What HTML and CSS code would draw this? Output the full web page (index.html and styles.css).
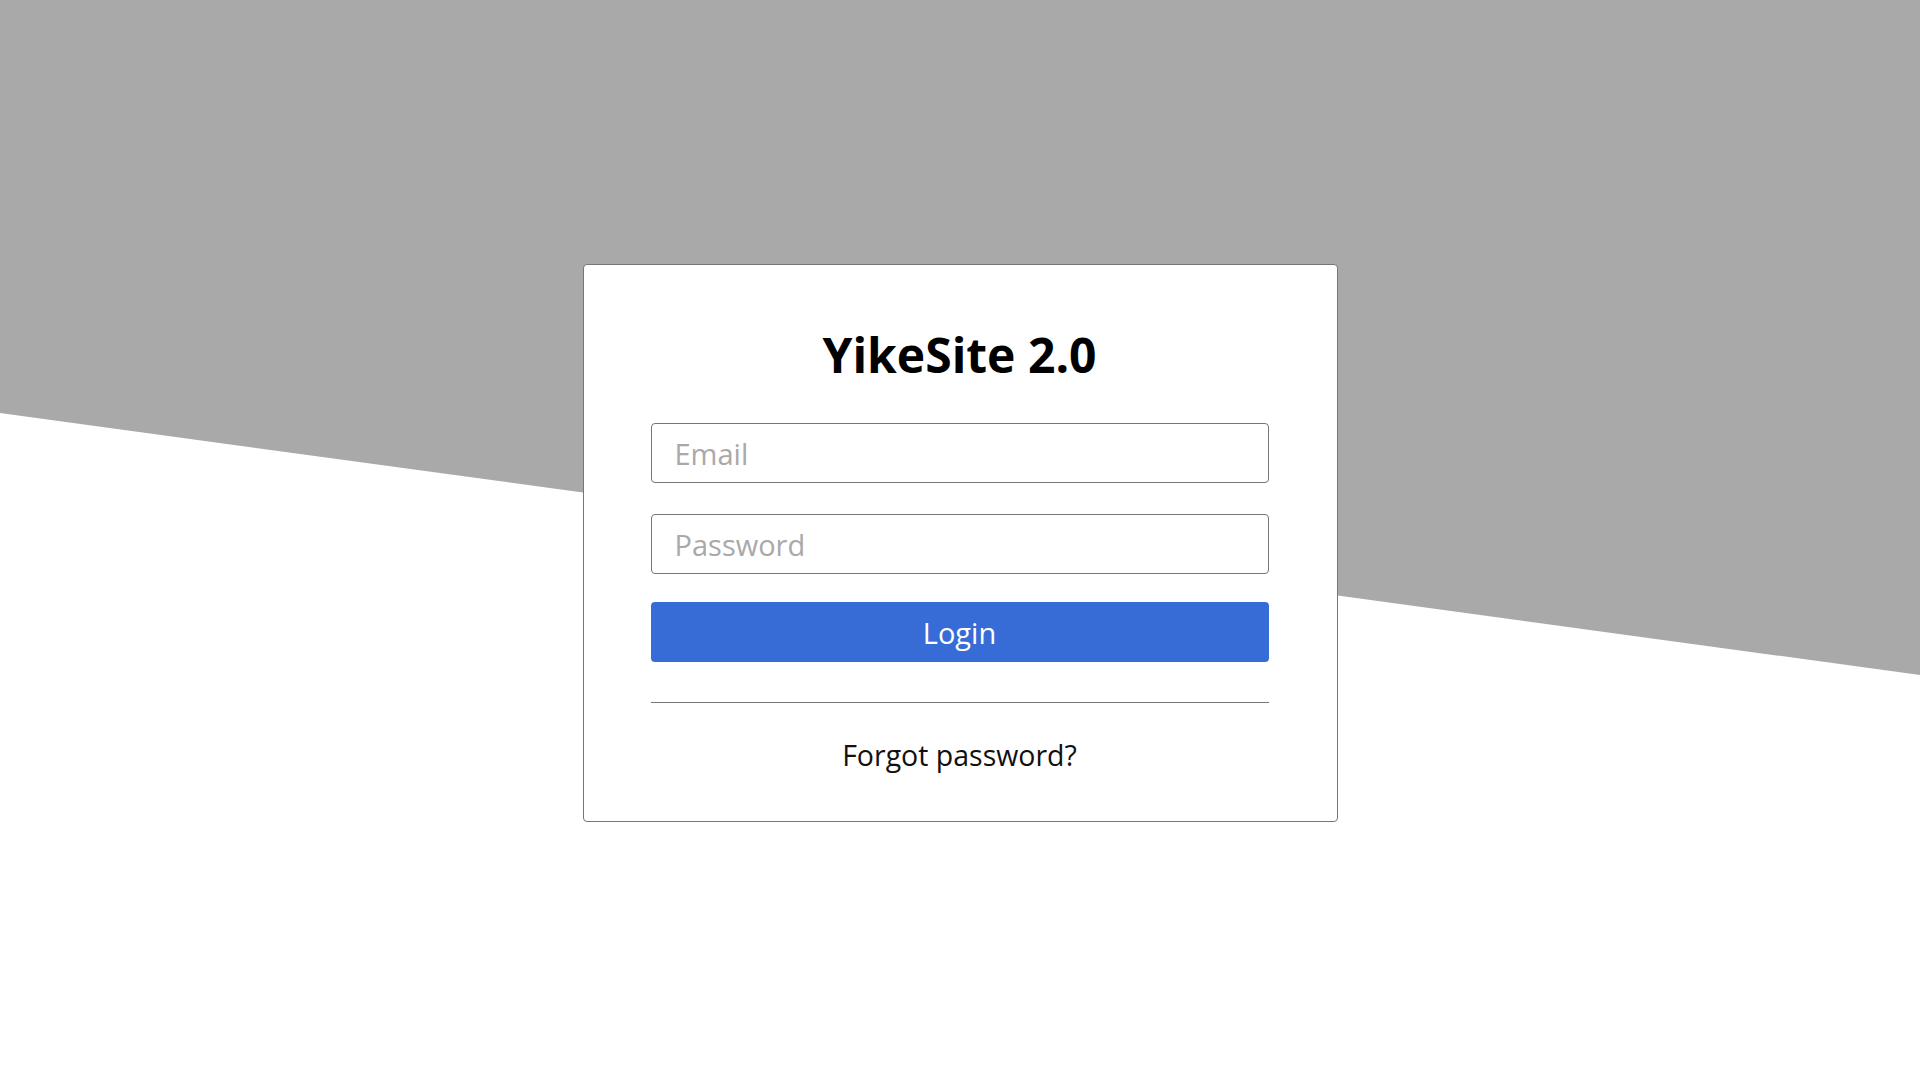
FILE: index.html
```html
<!DOCTYPE html>
<html lang="en">
<head>
<meta charset="utf-8">
<title>YikeSite 2.0 - Login</title>
<link rel="stylesheet" href="styles.css">
</head>
<body>
<div class="backdrop"></div>
<main class="page">
  <form class="card" onsubmit="return false">
    <h1 class="title">YikeSite 2.0</h1>
    <input class="field field-email" type="email" placeholder="Email">
    <input class="field field-password" type="password" placeholder="Password">
    <button class="login" type="submit">Login</button>
    <hr class="divider">
    <a class="forgot" href="#">Forgot password?</a>
  </form>
</main>
</body>
</html>
```

FILE: styles.css
```css
html, body {
  margin: 0;
  padding: 0;
  background: #ffffff;
  font-family: "Open Sans", "Noto Sans", "Liberation Sans", sans-serif;
}

.backdrop {
  position: absolute;
  left: 0;
  top: 0;
  width: 100%;
  height: 700px;
  background: #a9a9a9;
  clip-path: polygon(0 0, 100% 0, 100% 675px, 0 413px);
  z-index: 0;
}

.page {
  position: relative;
  z-index: 1;
  display: flex;
  justify-content: center;
  padding-top: 264px;
}

.card {
  box-sizing: border-box;
  width: 755px;
  height: 558px;
  background: #ffffff;
  border: 1px solid #767676;
  border-radius: 4px;
  padding: 65px 68px 0 67px;
  display: flex;
  flex-direction: column;
}

.title {
  margin: 0;
  font-size: 48px;
  line-height: 49px;
  font-weight: 700;
  text-align: center;
  color: #000000;
}

.field {
  box-sizing: border-box;
  width: 100%;
  height: 60px;
  margin: 0;
  border: 1px solid #767676;
  border-radius: 4px;
  padding: 0 23px;
  font-family: inherit;
  font-size: 29px;
  color: #222222;
  background: #ffffff;
  outline: none;
}

.field::placeholder {
  color: #a9a9a9;
}

.field-email {
  margin-top: 44px;
}

.field-password {
  margin-top: 31px;
}

.login {
  box-sizing: border-box;
  width: 100%;
  height: 60px;
  margin-top: 28px;
  border: none;
  border-radius: 4px;
  background: #376cd6;
  color: #ffffff;
  font-family: inherit;
  font-size: 29px;
  cursor: pointer;
}

.divider {
  width: 100%;
  margin: 40px 0 0;
  border: none;
  border-top: 1px solid #767676;
  height: 0;
}

.forgot {
  margin-top: 32px;
  font-size: 28.5px;
  line-height: 40px;
  text-align: center;
  color: #111111;
  text-decoration: none;
}
```
